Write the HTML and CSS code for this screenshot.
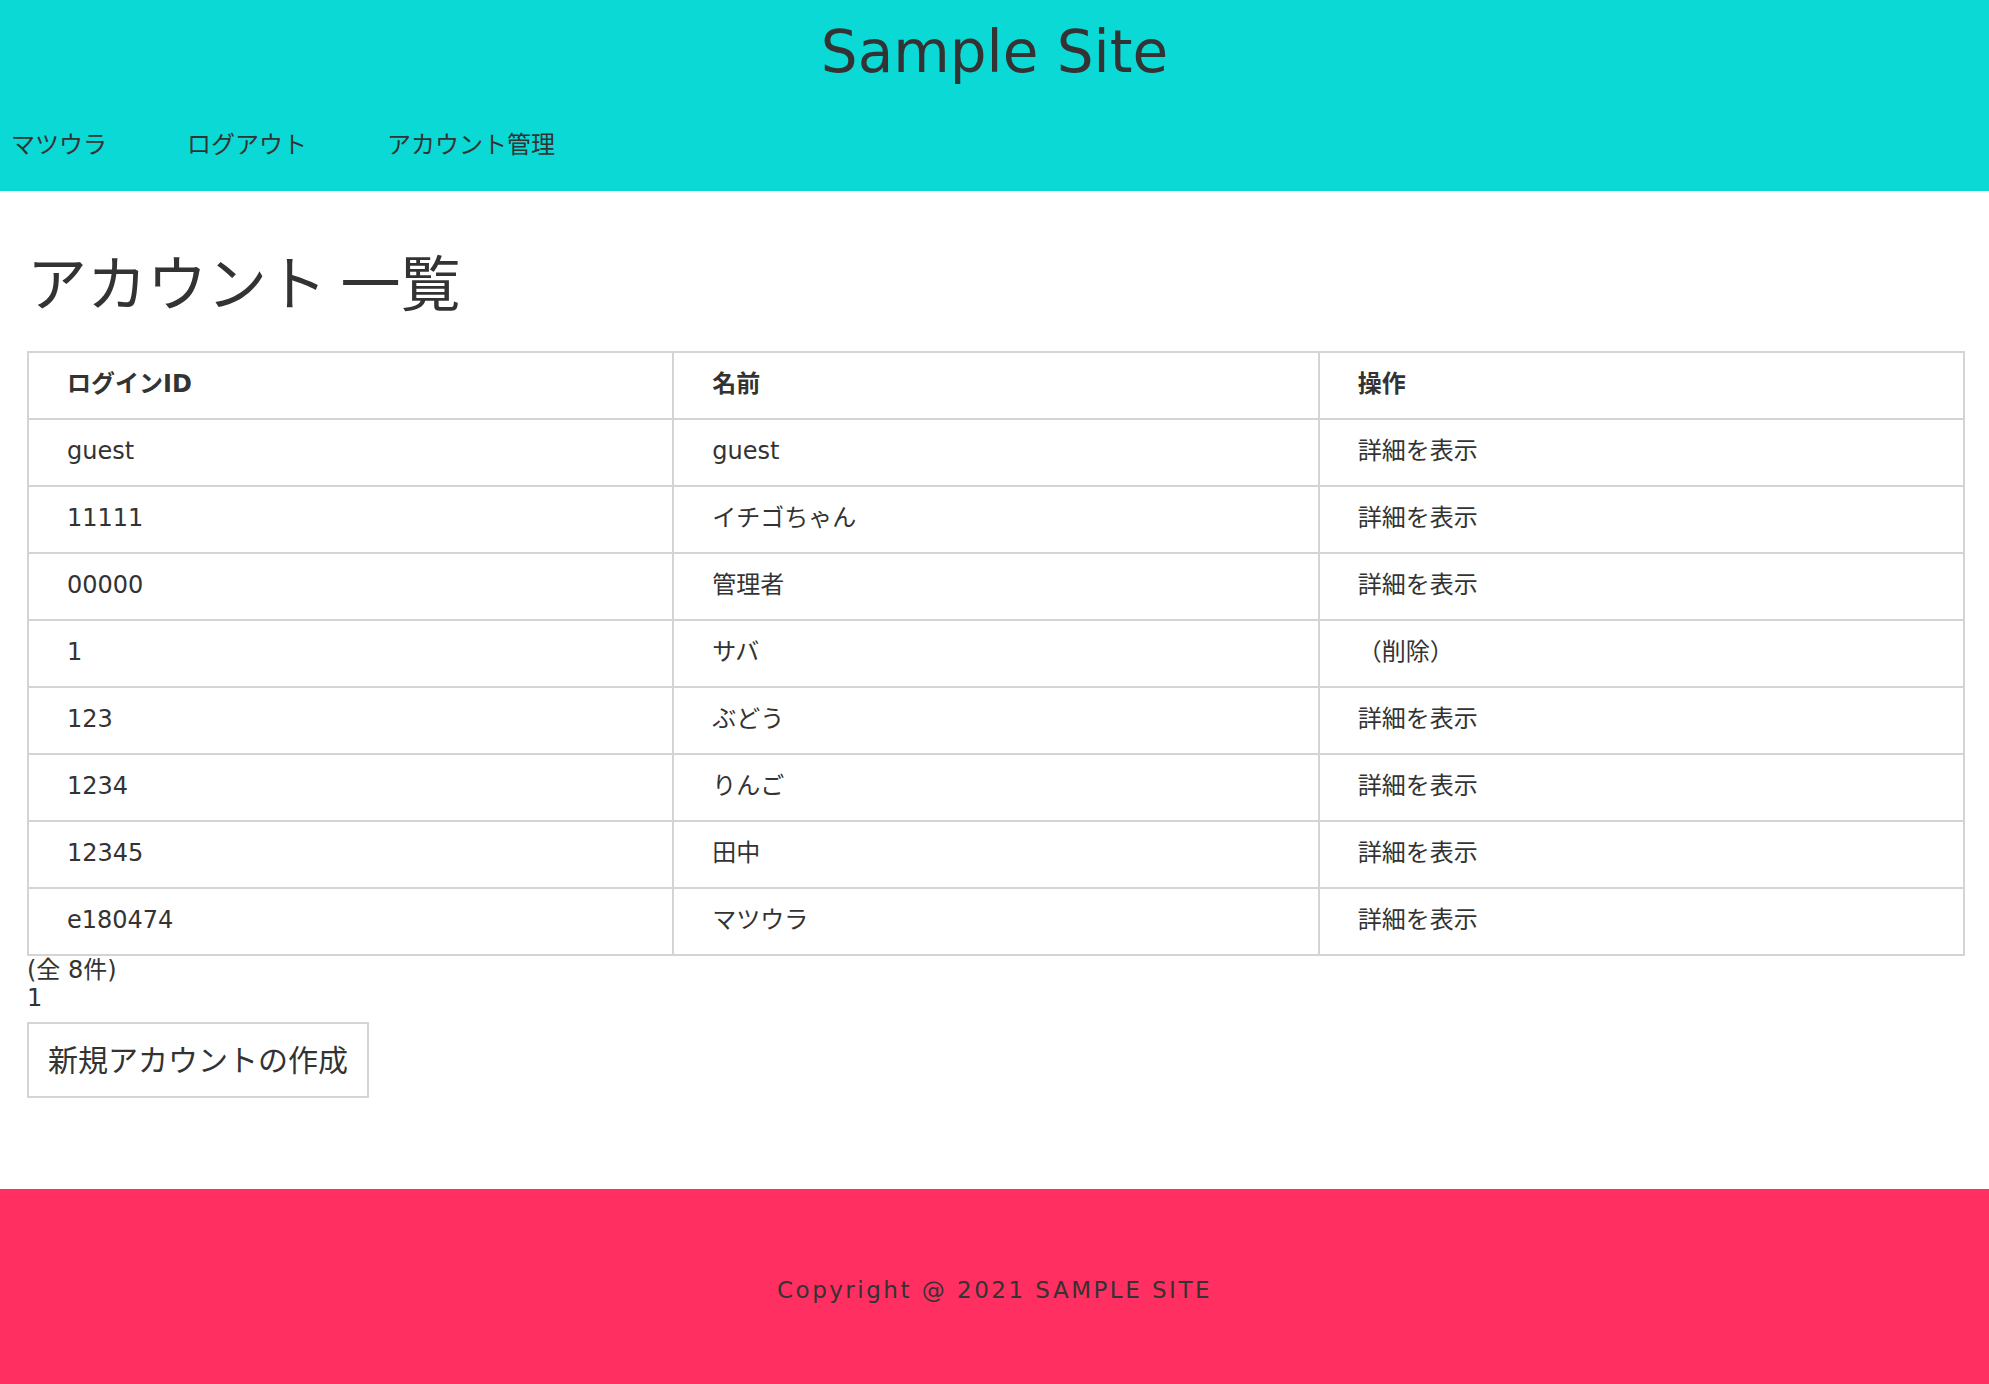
FILE: index.html
```html
<!DOCTYPE html>
<html lang="ja">
<head>
<meta charset="utf-8">
<title>アカウント一覧 | Sample Site</title>
<link rel="stylesheet" href="styles.css">
</head>
<body>
<header class="site-header">
  <h1 class="site-title">Sample Site</h1>
  <nav class="site-nav">
    <ul class="nav-list">
      <li class="nav-item"><a class="nav-link" href="#">マツウラ</a></li>
      <li class="nav-item"><a class="nav-link" href="#">ログアウト</a></li>
      <li class="nav-item"><a class="nav-link" href="#">アカウント管理</a></li>
    </ul>
  </nav>
</header>

<main class="content">
  <h2 class="page-title">アカウント 一覧</h2>
  <table class="account-table">
    <thead>
      <tr><th>ログインID</th><th>名前</th><th>操作</th></tr>
    </thead>
    <tbody>
      <tr><td>guest</td><td>guest</td><td><a class="cell-link" href="#">詳細を表示</a></td></tr>
      <tr><td>11111</td><td>イチゴちゃん</td><td><a class="cell-link" href="#">詳細を表示</a></td></tr>
      <tr><td>00000</td><td>管理者</td><td><a class="cell-link" href="#">詳細を表示</a></td></tr>
      <tr><td>1</td><td>サバ</td><td>（削除）</td></tr>
      <tr><td>123</td><td>ぶどう</td><td><a class="cell-link" href="#">詳細を表示</a></td></tr>
      <tr><td>1234</td><td>りんご</td><td><a class="cell-link" href="#">詳細を表示</a></td></tr>
      <tr><td>12345</td><td>田中</td><td><a class="cell-link" href="#">詳細を表示</a></td></tr>
      <tr><td>e180474</td><td>マツウラ</td><td><a class="cell-link" href="#">詳細を表示</a></td></tr>
    </tbody>
  </table>
  <div class="pager">
    <div class="pager-count">(全 8件)</div>
    <div class="pager-pages">1</div>
  </div>
  <div class="actions">
    <a class="btn" href="#">新規アカウントの作成</a>
  </div>
</main>

<footer class="site-footer">
  <p class="copyright">Copyright @ 2021 SAMPLE SITE</p>
</footer>
</body>
</html>
```

FILE: styles.css
```css
* {
  box-sizing: border-box;
}

html, body {
  margin: 0;
  padding: 0;
}

body {
  font-family: "DejaVu Sans", "Noto Sans CJK JP", sans-serif;
  color: #333333;
  background: #ffffff;
}

a {
  color: inherit;
  text-decoration: none;
}

/* Header */
.site-header {
  background: #0bd9d6;
  height: 191px;
  display: flex;
  flex-direction: column;
}

.site-title {
  margin: 0;
  font-size: 58px;
  font-weight: normal;
  line-height: 105px;
  height: 106px;
  text-align: center;
  color: #333333;
}

.site-nav {
  flex: 1;
  display: flex;
  align-items: center;
  padding-bottom: 12px;
}

.nav-list {
  list-style: none;
  margin: 0;
  padding: 0 0 0 11px;
  display: flex;
  gap: 80px;
}

.nav-item {
  font-family: "Noto Sans CJK JP", sans-serif;
  font-size: 24px;
  line-height: 30px;
}

/* Main */
.content {
  padding: 0 24px 91px 27px;
}

.page-title {
  margin: 53px 0 35px;
  font-family: "Noto Sans CJK JP", sans-serif;
  font-size: 60px;
  font-weight: normal;
  line-height: 72px;
}

.account-table {
  width: 100%;
  border-collapse: collapse;
  table-layout: fixed;
  border: 2px solid #d4d4d4;
  font-size: 24px;
}

.account-table th,
.account-table td {
  border: 2px solid #d4d4d4;
  height: 67px;
  padding: 0 38px 3px;
  text-align: left;
  vertical-align: middle;
  line-height: 30px;
}

.account-table th {
  font-weight: bold;
}

.pager {
  font-size: 24px;
  line-height: 28px;
}

.actions {
  display: flex;
  margin-top: 10px;
}

.btn {
  display: block;
  padding: 14px 19px 18px;
  border: 2px solid #d4d4d4;
  background: #ffffff;
  font-family: "Noto Sans CJK JP", sans-serif;
  font-size: 30px;
  line-height: 40px;
}

/* Footer */
.site-footer {
  background: #ff2f61;
  height: 196px;
  padding-top: 5px;
  display: flex;
  align-items: center;
  justify-content: center;
}

.copyright {
  margin: 0;
  font-size: 23px;
  letter-spacing: 2.5px;
  color: #333333;
}
```
